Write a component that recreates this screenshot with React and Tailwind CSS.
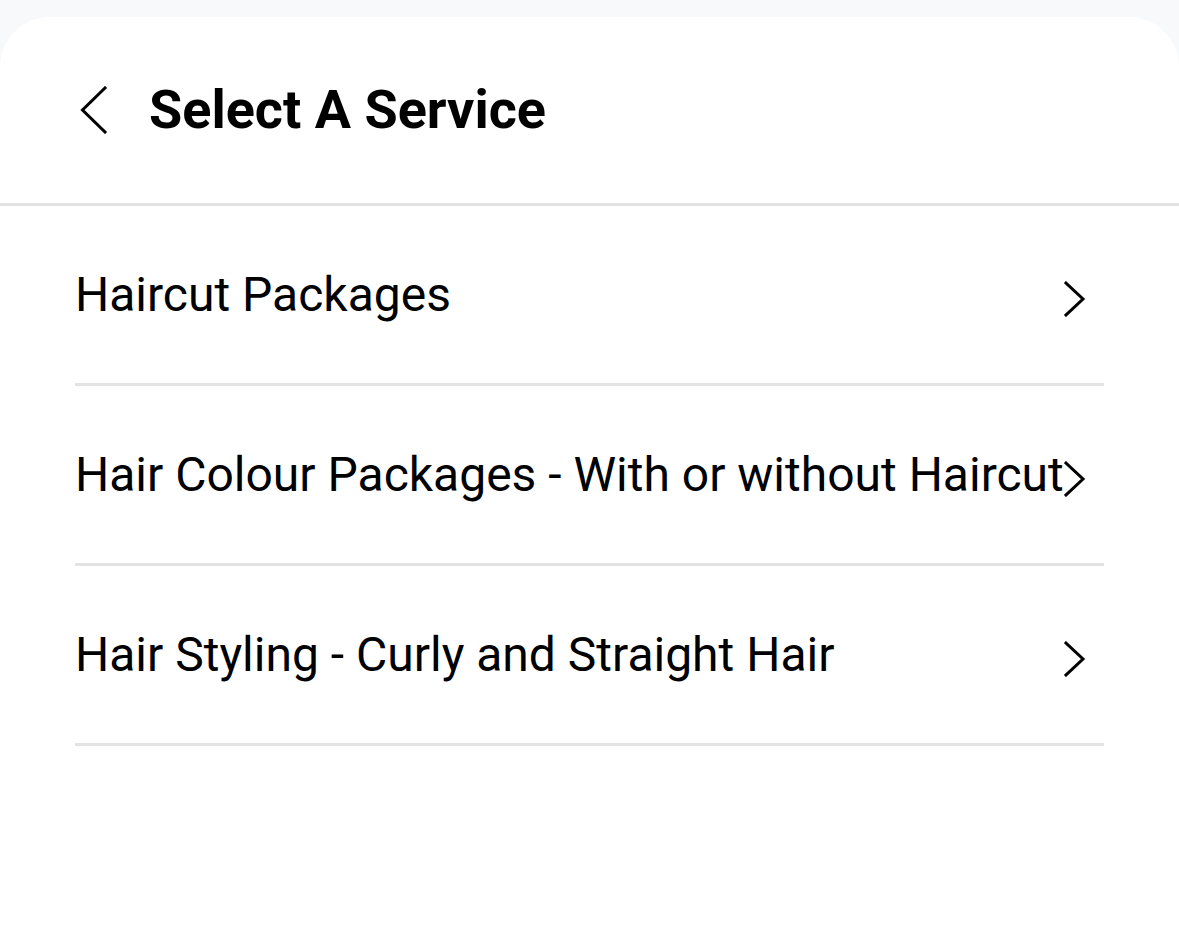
const SERVICES = [
  'Haircut Packages',
  'Hair Colour Packages - With or without Haircut',
  'Hair Styling - Curly and Straight Hair',
];

const BackChevron = () => (
  <svg width="28" height="48" viewBox="0 0 28 48" fill="none" className="shrink-0">
    <polyline points="25,2 2.5,24 25,46" stroke="black" strokeWidth="3" strokeLinecap="square" strokeLinejoin="miter" />
  </svg>
);

const RowChevron = () => (
  <svg width="22" height="36" viewBox="0 0 22 36" fill="none" className="shrink-0 mr-[18px] translate-y-[4px]">
    <polyline points="2,2 19,18 2,34" stroke="black" strokeWidth="3" strokeLinecap="square" strokeLinejoin="miter" />
  </svg>
);

const App = () => {
  return (
    <div className="min-h-[931px] bg-[#f8f9fa] pt-[17px]" style={{ fontFamily: 'Roboto, "Noto Sans", sans-serif' }}>
      <div className="min-h-[914px] bg-white rounded-t-[50px]">
        {/* Header */}
        <div className="h-[189px] flex items-center pl-[80px] border-b-[3px] border-[#e3e3e3]">
          <BackChevron />
          <h1 className="ml-[41px] text-[54px] font-bold text-black leading-none">Select A Service</h1>
        </div>

        {/* List */}
        <div className="px-[75px]">
          {SERVICES.map((name) => (
            <div
              key={name}
              className="h-[180px] flex items-center border-b-[3px] border-[#e3e3e3]"
            >
              <span className="flex-1 min-w-0 text-[48px] text-black whitespace-nowrap leading-none">{name}</span>
              <RowChevron />
            </div>
          ))}
        </div>
      </div>
    </div>
  );
};

export default App;
